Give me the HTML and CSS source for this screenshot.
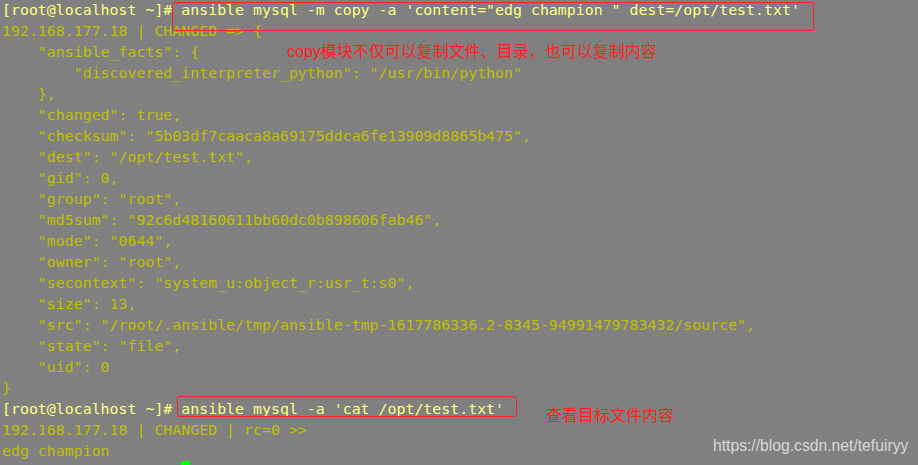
FILE: index.html
```html
<!DOCTYPE html>
<html>
<head>
<meta charset="utf-8">
<link rel="stylesheet" href="styles.css">
</head>
<body>
<div class="screen">
  <div class="term">
    <div class="line cmd">[root@localhost ~]# ansible mysql -m copy -a 'content="edg champion " dest=/opt/test.txt'</div>
    <div class="line">192.168.177.18 | CHANGED =&gt; {</div>
    <div class="line">    "ansible_facts": {</div>
    <div class="line">        "discovered_interpreter_python": "/usr/bin/python"</div>
    <div class="line">    },</div>
    <div class="line">    "changed": true,</div>
    <div class="line">    "checksum": "5b03df7caaca8a69175ddca6fe13909d8865b475",</div>
    <div class="line">    "dest": "/opt/test.txt",</div>
    <div class="line">    "gid": 0,</div>
    <div class="line">    "group": "root",</div>
    <div class="line">    "md5sum": "92c6d48160611bb60dc0b898606fab46",</div>
    <div class="line">    "mode": "0644",</div>
    <div class="line">    "owner": "root",</div>
    <div class="line">    "secontext": "system_u:object_r:usr_t:s0",</div>
    <div class="line">    "size": 13,</div>
    <div class="line">    "src": "/root/.ansible/tmp/ansible-tmp-1617786336.2-8345-94991479783432/source",</div>
    <div class="line">    "state": "file",</div>
    <div class="line">    "uid": 0</div>
    <div class="line">}</div>
    <div class="line cmd">[root@localhost ~]# ansible mysql -a 'cat /opt/test.txt'</div>
    <div class="line">192.168.177.18 | CHANGED | rc=0 &gt;&gt;</div>
    <div class="line">edg champion</div>
    <div class="line last"><span class="cursor"></span></div>
  </div>
  <div class="box box-one"></div>
  <div class="box box-two"></div>
  <div class="note note-one">copy模块不仅可以复制文件、目录，也可以复制内容</div>
  <div class="note note-two">查看目标文件内容</div>
  <div class="watermark">https://blog.csdn.net/tefuiryy</div>
</div>
</body>
</html>
```

FILE: styles.css
```css
html, body {
  margin: 0;
  padding: 0;
  background: #808080;
}
.screen {
  position: relative;
  width: 918px;
  height: 465px;
  overflow: hidden;
  background: #808080;
}
.term {
  padding: 0 0 0 2px;
  font-family: "DejaVu Sans Mono", "Liberation Mono", monospace;
  font-size: 14.9px;
  line-height: 21px;
  color: #c0c000;
}
.line {
  white-space: pre;
  height: 21px;
}
.line.cmd {
  color: #ffff80;
}
.line.last {
  display: flex;
  padding: 0 0 0 179px;
  margin-top: -1px;
}
.cursor {
  display: block;
  width: 9px;
  height: 5px;
  background: #00ff00;
}
.box {
  position: absolute;
  border: 1.5px solid #ff2020;
  border-radius: 3px;
  box-sizing: border-box;
}
.box-one {
  left: 172px;
  top: 2px;
  width: 642px;
  height: 29px;
}
.box-two {
  left: 177px;
  top: 396px;
  width: 340px;
  height: 21px;
}
.note {
  position: absolute;
  font-family: "Liberation Sans", "Noto Sans CJK SC", sans-serif;
  font-size: 16px;
  line-height: 20px;
  color: #ff2020;
  white-space: nowrap;
}
.note-one {
  left: 287px;
  top: 42px;
}
.note-two {
  left: 546px;
  top: 406px;
}
.watermark {
  position: absolute;
  left: 713px;
  top: 436px;
  font-family: "Liberation Sans", Arial, sans-serif;
  font-size: 15.7px;
  line-height: 20px;
  color: #d8d8d8;
  white-space: nowrap;
}
```
